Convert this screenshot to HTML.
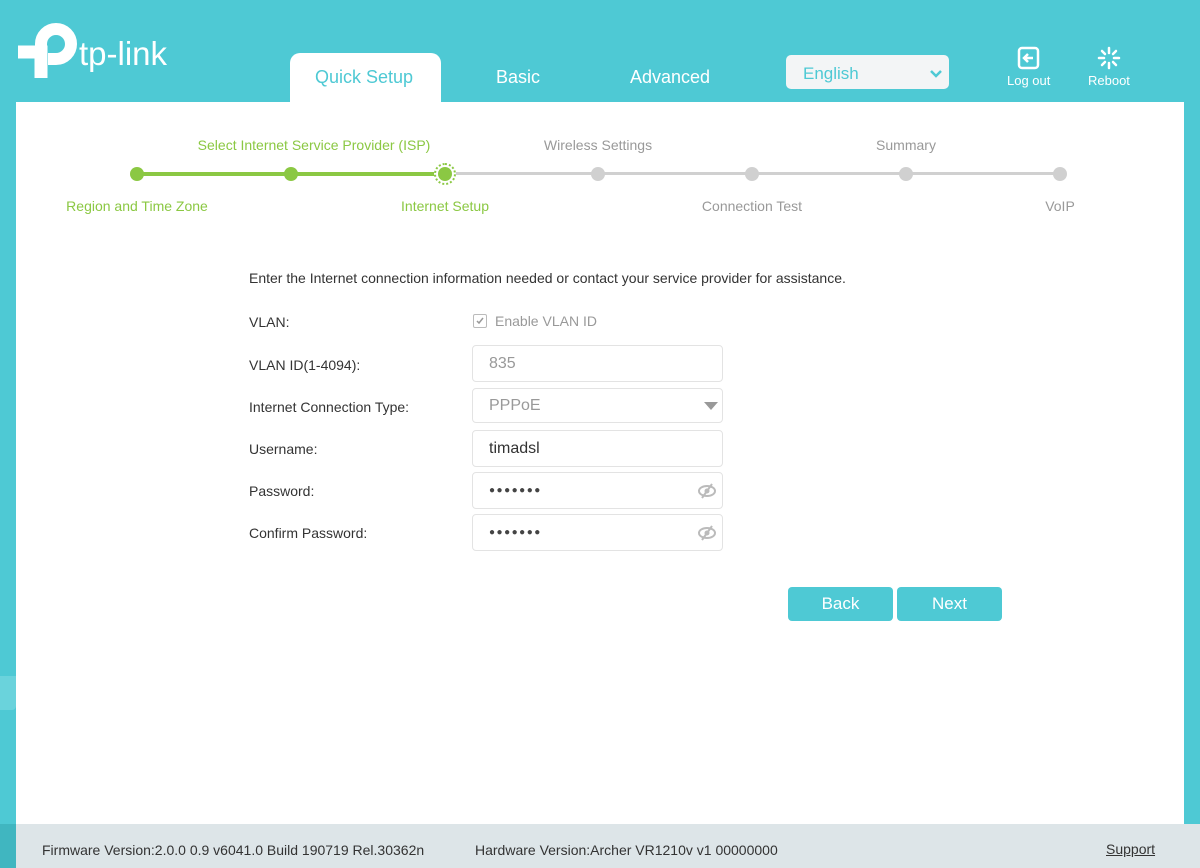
<!DOCTYPE html>
<html><head><style>
*{margin:0;padding:0;box-sizing:border-box}
body{width:1200px;height:868px;background:#4ec9d4;font-family:"Liberation Sans",sans-serif;position:relative;overflow:hidden}
.abs{position:absolute}
.panel{left:16px;top:102px;width:1168px;height:722px;background:#fff}
.tab{color:#fff;font-size:18px;top:67px}
.foot{left:16px;top:824px;width:1184px;height:44px;background:#dde5e8;font-size:14px;color:#333}
.lbl{left:249px;font-size:14px;color:#333}
.inp{left:472px;width:251px;height:37px;border:1px solid #e3e3e3;border-radius:4px;font-size:16px;padding-left:16px;line-height:35px;background:#fff}
.dot{width:14px;height:14px;border-radius:50%;top:167px}
.st{font-size:14px;transform:translateX(-50%);white-space:nowrap}
.btn{top:587px;height:34px;background:#4ec9d4;color:#fff;font-size:17px;text-align:center;line-height:34px;border-radius:4px}
.pw{color:#444;font-size:10px;letter-spacing:1.5px}
</style></head><body>
<div class="abs" style="left:0;top:824px;width:16px;height:44px;background:#40b6c0"></div>
<div class="abs" style="left:0;top:676px;width:16px;height:34px;background:#6ad3dc;border-radius:0 0 4px 0"></div>
<!-- logo -->
<svg class="abs" style="left:14px;top:20px" width="64" height="64" viewBox="0 0 64 64">
<path d="M4 32 H27 V58" stroke="#fff" stroke-width="13" fill="none"/>
<path d="M27 34 V24 A15 15 0 1 1 42 39 H34" stroke="#fff" stroke-width="12" fill="none"/>
</svg>
<div class="abs" style="left:79px;top:35px;color:#fff;font-size:33px;letter-spacing:0px">tp-link</div>
<div class="abs" style="left:290px;top:53px;width:151px;height:52px;background:#fff;border-radius:10px 10px 0 0"></div>
<div class="abs tab" style="left:315px;color:#4ec9d4">Quick Setup</div>
<div class="abs tab" style="left:496px">Basic</div>
<div class="abs tab" style="left:630px">Advanced</div>
<div class="abs" style="left:786px;top:55px;width:163px;height:34px;background:#f3f5f6;border-radius:5px;color:#4ec9d4;font-size:17px;padding:9px 0 0 17px">English
<svg class="abs" style="left:143px;top:14px" width="14" height="9"><path d="M2 2 L7 7 L12 2" stroke="#4ec9d4" stroke-width="2.5" fill="none"/></svg></div>
<svg class="abs" style="left:1017px;top:46px" width="24" height="24"><rect x="2" y="2" width="19" height="20" rx="3" fill="none" stroke="#fff" stroke-width="2.5"/><path d="M16 12 H8 M11 8 L7 12 L11 16" stroke="#fff" stroke-width="2.5" fill="none"/></svg>
<div class="abs" style="left:1007px;top:73px;color:#fff;font-size:13px">Log out</div>
<svg class="abs" style="left:1097px;top:46px" width="24" height="24" stroke="#fff" stroke-width="2.5" stroke-linecap="round"><path d="M12 2V7M12 17V22M2 12H7M17 12H22M5 5L8 8M16 16L19 19M19 5L16 8M8 16L5 19"/></svg>
<div class="abs" style="left:1088px;top:73px;color:#fff;font-size:13px">Reboot</div>
<div class="abs panel"></div>
<!-- progress -->
<div class="abs" style="left:137px;top:172px;width:308px;height:4px;background:#8bc843"></div>
<div class="abs" style="left:445px;top:172px;width:615px;height:3px;background:#d0d0d0"></div>
<div class="abs dot" style="left:130px;background:#8bc843"></div>
<div class="abs dot" style="left:284px;background:#8bc843"></div>
<div class="abs" style="left:434px;top:163px;width:22px;height:22px;border-radius:50%;border:2px dotted #8bc843;background:#fff"></div>
<div class="abs dot" style="left:438px;background:#8bc843"></div>
<div class="abs dot" style="left:591px;background:#d0d0d0"></div>
<div class="abs dot" style="left:745px;background:#d0d0d0"></div>
<div class="abs dot" style="left:899px;background:#d0d0d0"></div>
<div class="abs dot" style="left:1053px;background:#d0d0d0"></div>
<div class="abs st" style="left:314px;top:137px;color:#8bc843">Select Internet Service Provider (ISP)</div>
<div class="abs st" style="left:598px;top:137px;color:#999">Wireless Settings</div>
<div class="abs st" style="left:906px;top:137px;color:#999">Summary</div>
<div class="abs st" style="left:137px;top:198px;color:#8bc843">Region and Time Zone</div>
<div class="abs st" style="left:445px;top:198px;color:#8bc843">Internet Setup</div>
<div class="abs st" style="left:752px;top:198px;color:#999">Connection Test</div>
<div class="abs st" style="left:1060px;top:198px;color:#999">VoIP</div>
<div class="abs lbl" style="top:270px">Enter the Internet connection information needed or contact your service provider for assistance.</div>
<div class="abs lbl" style="top:314px">VLAN:</div>
<div class="abs" style="left:473px;top:314px;width:14px;height:14px;border:1px solid #bbb;border-radius:2px"><svg width="12" height="12" style="position:absolute;left:0;top:0"><path d="M3 6 L5 8 L9 3" stroke="#999" stroke-width="1.5" fill="none"/></svg></div>
<div class="abs" style="left:495px;top:313px;font-size:14px;color:#999">Enable VLAN ID</div>
<div class="abs lbl" style="top:357px">VLAN ID(1-4094):</div>
<div class="abs inp" style="top:345px;color:#999">835</div>
<div class="abs lbl" style="top:399px">Internet Connection Type:</div>
<div class="abs inp" style="top:388px;height:35px;line-height:33px;color:#999">PPPoE<svg class="abs" style="left:231px;top:13px" width="14" height="9"><path d="M0 0H14L7 8Z" fill="#999"/></svg></div>
<div class="abs lbl" style="top:441px">Username:</div>
<div class="abs inp" style="top:430px;color:#333">timadsl</div>
<div class="abs lbl" style="top:483px">Password:</div>
<div class="abs inp pw" style="top:472px">●●●●●●●<svg class="abs" style="left:224px;top:9px" width="20" height="18"><ellipse cx="10" cy="9" rx="8" ry="5" fill="none" stroke="#bbb" stroke-width="2"/><circle cx="10" cy="9" r="2.5" fill="#bbb"/><path d="M5 16 L15 2" stroke="#bbb" stroke-width="2"/></svg></div>
<div class="abs lbl" style="top:525px">Confirm Password:</div>
<div class="abs inp pw" style="top:514px">●●●●●●●<svg class="abs" style="left:224px;top:9px" width="20" height="18"><ellipse cx="10" cy="9" rx="8" ry="5" fill="none" stroke="#bbb" stroke-width="2"/><circle cx="10" cy="9" r="2.5" fill="#bbb"/><path d="M5 16 L15 2" stroke="#bbb" stroke-width="2"/></svg></div>
<div class="abs btn" style="left:788px;width:105px">Back</div>
<div class="abs btn" style="left:897px;width:105px">Next</div>
<div class="abs foot">
<span class="abs" style="left:26px;top:18px">Firmware Version:2.0.0 0.9 v6041.0 Build 190719 Rel.30362n</span>
<span class="abs" style="left:459px;top:18px">Hardware Version:Archer VR1210v v1 00000000</span>
<span class="abs" style="left:1090px;top:17px;text-decoration:underline">Support</span>
</div>
</body></html>
